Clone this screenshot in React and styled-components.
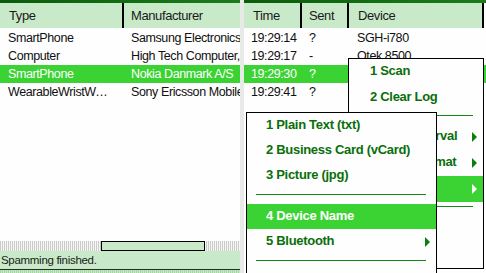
import styled, { createGlobalStyle } from "styled-components";

const GlobalStyle = createGlobalStyle`
  html, body {
    margin: 0;
    padding: 0;
    background: #ffffff;
    overflow: hidden;
  }
  #root {
    width: 486px;
    height: 273px;
  }
`;

const sans = `"Liberation Sans", Arial, sans-serif`;

const Screen = styled.div`
  position: relative;
  display: flex;
  width: 486px;
  height: 273px;
  overflow: hidden;
  background: #fdfefd;
  font-family: ${sans};
  color: #101010;
`;

const Panel = styled.div`
  display: flex;
  flex-direction: column;
  width: ${(p) => p.$width}px;
  flex: ${(p) => (p.$grow ? 1 : "none")};
  min-width: 0;
  overflow: hidden;
`;

const Divider = styled.div`
  width: 4px;
  background: #e7eae7;
`;

const TopStrip = styled.div`
  height: 3px;
  background: linear-gradient(90deg, #0b5c0b, #137013 60%, #1c7c1c);
`;

const HeaderRow = styled.div`
  display: flex;
  height: 25px;
  background: #c9eac9;
  margin-right: ${(p) => p.$inset || 0}px;
`;

const HeaderCell = styled.div`
  box-sizing: border-box;
  width: ${(p) => (p.$width ? `${p.$width}px` : "auto")};
  flex: ${(p) => (p.$width ? "none" : 1)};
  padding-left: ${(p) => p.$pad}px;
  display: flex;
  align-items: center;
  font-size: 13px;
  letter-spacing: -0.4px;
  color: #1a1a1a;
  white-space: nowrap;
  overflow: hidden;
  border-right: ${(p) => (p.$sep ? "2px solid #000" : "none")};
`;

const Rows = styled.div`
  display: flex;
  flex-direction: column;
  padding-top: 1px;
  flex: 1;
`;

const Row = styled.div`
  display: flex;
  height: 18px;
  align-items: center;
  background: ${(p) => (p.$selected ? "#3bd234" : "transparent")};
  color: ${(p) => (p.$selected ? "#ffffff" : "#101010")};
`;

const Cell = styled.div`
  box-sizing: border-box;
  width: ${(p) => (p.$width ? `${p.$width}px` : "auto")};
  flex: ${(p) => (p.$width ? "none" : 1)};
  padding-left: ${(p) => p.$pad}px;
  padding-right: ${(p) => (p.$ellipsis ? 8 : 2)}px;
  font-size: 12.5px;
  letter-spacing: -0.4px;
  white-space: nowrap;
  overflow: hidden;
  text-overflow: ${(p) => (p.$ellipsis ? "ellipsis" : "clip")};
`;

const ScrollTrack = styled.div`
  height: 10px;
  display: flex;
  background: repeating-linear-gradient(
    90deg,
    #c9ccc9 0 1px,
    #f6f7f6 1px 2px
  );
`;

const ScrollThumb = styled.div`
  box-sizing: border-box;
  margin-left: ${(p) => p.$left}px;
  width: ${(p) => p.$size}px;
  height: 10px;
  background: #c9eac9;
  border: 1px solid #000;
`;

const StatusBar = styled.div`
  height: 18px;
  display: flex;
  align-items: center;
  padding-left: 1px;
  background: #c9eac9;
  border-bottom: 1px solid #2b2b2b;
  font-size: 11.5px;
  letter-spacing: -0.3px;
  color: #1a1a1a;
`;

const BottomHatch = styled.div`
  height: 3px;
  background: repeating-linear-gradient(
    90deg,
    #9fd79f 0 1px,
    #c9eac9 1px 2px
  );
`;

const Menu = styled.div`
  position: absolute;
  left: ${(p) => p.$left}px;
  top: ${(p) => p.$top}px;
  width: ${(p) => p.$width}px;
  height: ${(p) => p.$height}px;
  box-sizing: border-box;
  border: 1px solid #000;
  background: #fdfefd;
  display: flex;
  flex-direction: column;
  font-family: ${sans};
  font-weight: bold;
  font-size: 13px;
  letter-spacing: -0.3px;
`;

const MenuItem = styled.div`
  height: ${(p) => p.$h}px;
  flex: none;
  display: flex;
  align-items: center;
  padding-left: ${(p) => p.$pad}px;
  padding-right: 6px;
  padding-bottom: 3px;
  box-sizing: border-box;
  background: ${(p) => (p.$active ? "#3bd234" : "transparent")};
  color: ${(p) => (p.$active ? "#ffffff" : "#0a6e0a")};
  white-space: nowrap;
`;

const Label = styled.span`
  flex: 1;
  overflow: hidden;
`;

const Arrow = styled.span`
  width: 0;
  height: 0;
  border-top: 5px solid transparent;
  border-bottom: 5px solid transparent;
  border-left: 5px solid ${(p) => (p.$active ? "#ffffff" : "#0a800a")};
  margin-top: 3px;
`;

const Separator = styled.div`
  height: ${(p) => p.$h}px;
  flex: none;
  box-sizing: border-box;
  padding-top: ${(p) => p.$at}px;
  padding-left: 9px;
  padding-right: 10px;
`;

const SeparatorLine = styled.div`
  height: 1px;
  background: #128a12;
`;

const devices = [
  { type: "SmartPhone", maker: "Samsung Electronics" },
  { type: "Computer", maker: "High Tech Computer, Corp." },
  { type: "SmartPhone", maker: "Nokia Danmark A/S", selected: true },
  { type: "WearableWristWatch", maker: "Sony Ericsson Mobile Communications" },
];

const log = [
  { time: "19:29:14", sent: "?", device: "SGH-i780" },
  { time: "19:29:17", sent: "-", device: "Qtek 8500" },
  { time: "19:29:30", sent: "?", device: "Nokia N95", selected: true },
  { time: "19:29:41", sent: "?", device: "MBW-150" },
];

const mainMenu = [
  { label: "1 Scan" },
  { label: "2 Clear Log" },
  { sep: true },
  { label: "3 Scan Interval", sub: true },
  { label: "4 Send Format", sub: true },
  { label: "5 Send", sub: true, active: true },
  { sep: true },
  { label: "6 About" },
  { label: "0 Exit" },
];

const sendMenu = [
  { label: "1 Plain Text (txt)" },
  { label: "2 Business Card (vCard)" },
  { label: "3 Picture (jpg)" },
  { sep: true, h: 16, at: 6 },
  { label: "4 Device Name", active: true },
  { label: "5 Bluetooth", sub: true },
  { sep: true, h: 13, at: 6 },
  { label: "6 Random" },
];

function PopupMenu({ items, itemHeight, pad, left, top, width, height }) {
  return (
    <Menu $left={left} $top={top} $width={width} $height={height}>
      {items.map((item, i) =>
        item.sep ? (
          <Separator key={i} $h={item.h || 13} $at={item.at || 4}>
            <SeparatorLine />
          </Separator>
        ) : (
          <MenuItem key={i} $h={itemHeight} $pad={pad} $active={item.active}>
            <Label>{item.label}</Label>
            {item.sub && <Arrow $active={item.active} />}
          </MenuItem>
        )
      )}
    </Menu>
  );
}

export default function App() {
  return (
    <>
      <GlobalStyle />
      <Screen>
        <Panel $width={240}>
          <TopStrip />
          <HeaderRow>
            <HeaderCell $width={124} $pad={9} $sep>
              Type
            </HeaderCell>
            <HeaderCell $pad={7}>Manufacturer</HeaderCell>
          </HeaderRow>
          <Rows>
            {devices.map((d, i) => (
              <Row key={i} $selected={d.selected}>
                <Cell $width={122} $pad={8} $ellipsis>
                  {d.type}
                </Cell>
                <Cell $pad={9}>{d.maker}</Cell>
              </Row>
            ))}
          </Rows>
          <ScrollTrack>
            <ScrollThumb $left={101} $size={104} />
          </ScrollTrack>
          <StatusBar>Spamming finished.</StatusBar>
          <BottomHatch />
        </Panel>
        <Divider />
        <Panel $grow>
          <TopStrip />
          <HeaderRow $inset={2}>
            <HeaderCell $width={58} $pad={9} $sep>
              Time
            </HeaderCell>
            <HeaderCell $width={47} $pad={7} $sep>
              Sent
            </HeaderCell>
            <HeaderCell $pad={9} $sep>
              Device
            </HeaderCell>
          </HeaderRow>
          <Rows>
            {log.map((r, i) => (
              <Row key={i} $selected={r.selected}>
                <Cell $width={56} $pad={7}>
                  {r.time}
                </Cell>
                <Cell $width={49} $pad={9}>
                  {r.sent}
                </Cell>
                <Cell $pad={8}>{r.device}</Cell>
              </Row>
            ))}
          </Rows>
        </Panel>
        <PopupMenu
          items={mainMenu}
          itemHeight={26}
          pad={21}
          left={348}
          top={58}
          width={136}
          height={211}
        />
        <PopupMenu
          items={sendMenu}
          itemHeight={25}
          pad={19}
          left={246}
          top={112}
          width={191}
          height={175}
        />
      </Screen>
    </>
  );
}
